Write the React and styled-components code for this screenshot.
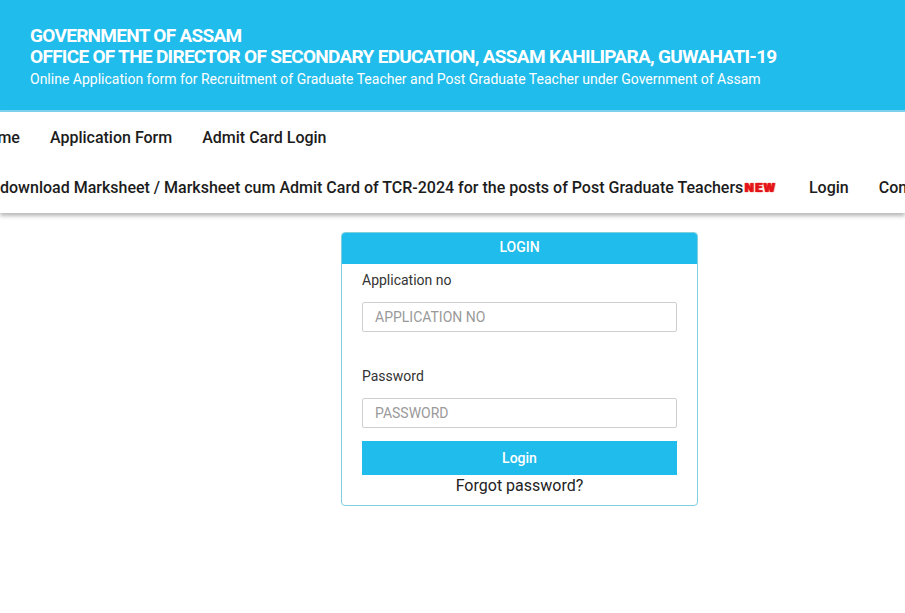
import styled, { createGlobalStyle } from "styled-components";

const GlobalStyle = createGlobalStyle`
  html, body {
    margin: 0;
    padding: 0;
    background: #fff;
    font-family: Roboto, "Liberation Sans", Arial, sans-serif;
    overflow: hidden;
  }
`;

const Page = styled.div`
  width: 905px;
  height: 613px;
  overflow: hidden;
`;

const Banner = styled.header`
  background: #20bceb;
  height: 112px;
  border-bottom: 2px solid #7fd3ee;
  padding: 25px 0 0 30px;
  box-sizing: border-box;
  color: #fff;
`;

const Title = styled.div`
  font-size: 19px;
  font-weight: 700;
  letter-spacing: -0.7px;
  line-height: 21px;
`;

const Subtitle = styled.div`
  font-size: 14px;
  line-height: 16px;
  margin-top: 4px;
`;

const Nav = styled.nav`
  height: 101px;
  background: #fff;
  box-shadow: 0 3px 4px rgba(0, 0, 0, 0.28);
  overflow: hidden;
  display: flex;
  flex-direction: column;
  padding-top: 15px;
  box-sizing: border-box;
`;

const NavRow = styled.ul`
  list-style: none;
  margin: 0 0 0 ${(p) => p.$shift}px;
  padding: 0;
  display: flex;
  align-items: center;
  gap: ${(p) => p.$gap}px;
  height: 20px;
  white-space: nowrap;
  & + & {
    margin-top: 30px;
  }
`;

const NavItem = styled.li`
  font-size: 16px;
  font-weight: 500;
  color: #1c1c1c;
  display: flex;
  align-items: center;
  margin-left: ${(p) => p.$pull || 0}px;
`;

const NewBadge = styled.span`
  color: #e3121a;
  font-size: 13px;
  font-weight: 900;
  letter-spacing: 1.3px;
  margin-left: 1px;
  text-shadow: 0 0 1px #ff3b3b, 1px 0 1px #c00;
`;

const Main = styled.main`
  display: flex;
  justify-content: center;
  padding: 19px 0 0 134px;
`;

const Card = styled.section`
  width: 357px;
  border: 1px solid #7fcfdc;
  border-radius: 4px;
  box-sizing: border-box;
  overflow: hidden;
`;

const CardHead = styled.div`
  background: #20bceb;
  color: #fff;
  text-align: center;
  font-size: 14px;
  font-weight: 500;
  height: 31px;
  line-height: 29px;
`;

const CardBody = styled.div`
  padding: 6px 20px 9px;
  display: flex;
  flex-direction: column;
`;

const Label = styled.label`
  font-size: 14px;
  color: #333;
  line-height: 20px;
  margin-top: ${(p) => p.$top || 0}px;
`;

const Input = styled.input`
  margin-top: 12px;
  height: 30px;
  box-sizing: border-box;
  border: 1px solid #cfcfcf;
  border-radius: 2px;
  padding: 0 12px;
  font-family: inherit;
  font-size: 14px;
  color: #333;
  &::placeholder {
    color: #9a9a9a;
  }
`;

const Button = styled.button`
  margin-top: 13px;
  height: 34px;
  border: none;
  background: #20bceb;
  color: #fff;
  font-family: inherit;
  font-size: 14px;
  font-weight: 500;
  cursor: pointer;
`;

const Forgot = styled.a`
  text-align: center;
  font-size: 16px;
  color: #222;
  line-height: 20px;
  margin-top: 1px;
`;

export default function App() {
  return (
    <Page>
      <GlobalStyle />
      <Banner>
        <Title>GOVERNMENT OF ASSAM</Title>
        <Title>OFFICE OF THE DIRECTOR OF SECONDARY EDUCATION, ASSAM KAHILIPARA, GUWAHATI-19</Title>
        <Subtitle>
          Online Application form for Recruitment of Graduate Teacher and Post Graduate Teacher under Government of Assam
        </Subtitle>
      </Banner>
      <Nav>
        <NavRow $shift={-23} $gap={30}>
          <NavItem>Home</NavItem>
          <NavItem>Application Form</NavItem>
          <NavItem>Admit Card Login</NavItem>
        </NavRow>
        <NavRow $shift={0} $gap={33}>
          <NavItem>
            download Marksheet / Marksheet cum Admit Card of TCR-2024 for the posts of Post Graduate Teachers
            <NewBadge>NEW</NewBadge>
          </NavItem>
          <NavItem>Login</NavItem>
          <NavItem $pull={-3}>Contact</NavItem>
        </NavRow>
      </Nav>
      <Main>
        <Card>
          <CardHead>LOGIN</CardHead>
          <CardBody>
            <Label>Application no</Label>
            <Input placeholder="APPLICATION NO" />
            <Label $top={34}>Password</Label>
            <Input type="password" placeholder="PASSWORD" />
            <Button>Login</Button>
            <Forgot>Forgot password?</Forgot>
          </CardBody>
        </Card>
      </Main>
    </Page>
  );
}
